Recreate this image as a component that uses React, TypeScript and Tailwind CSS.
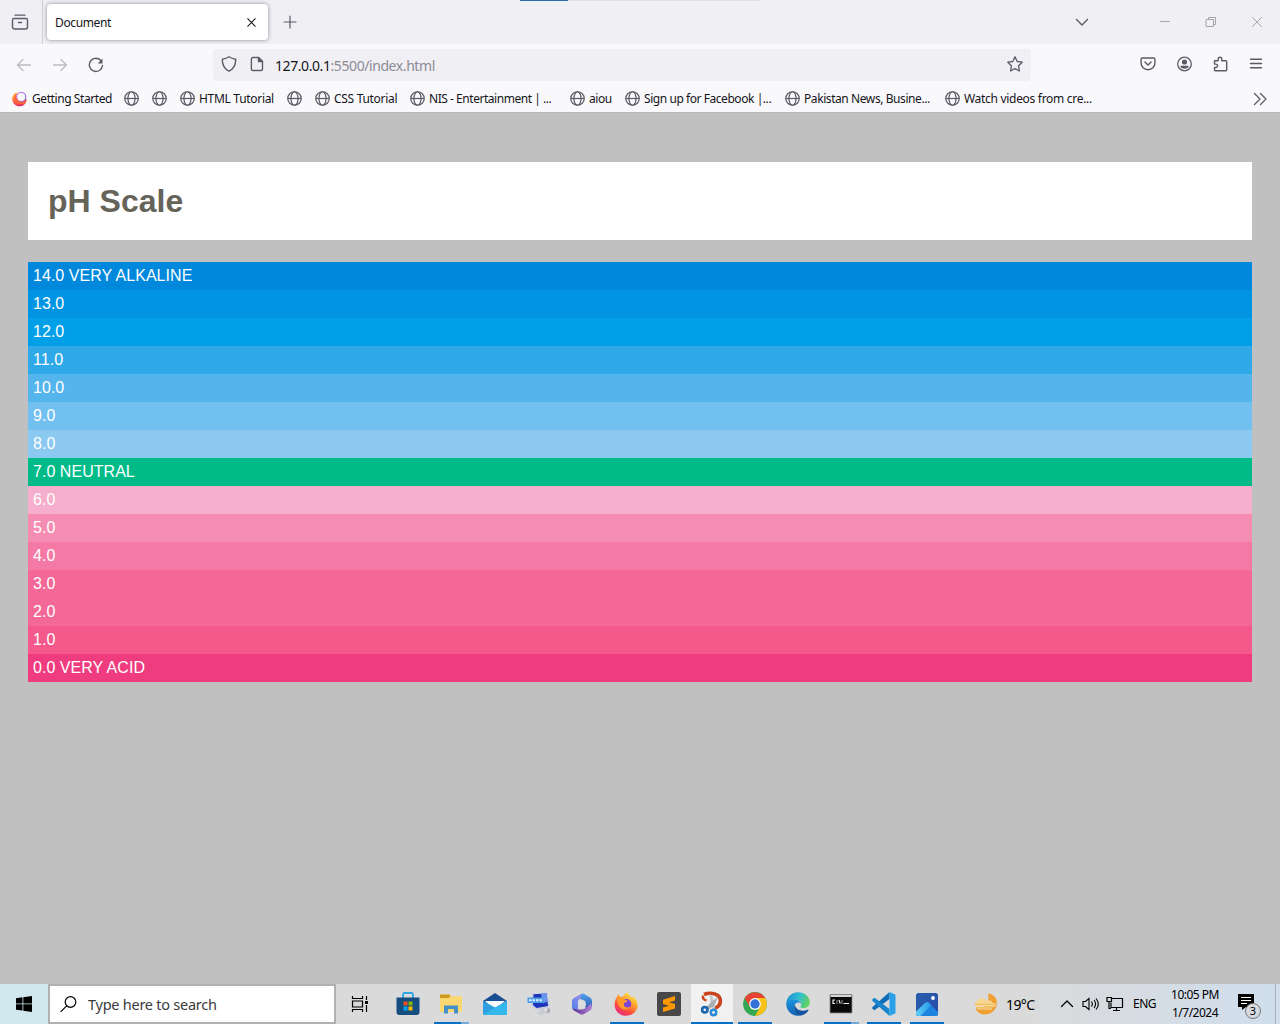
import React from "react";

type IconProps = { className?: string };

const bands = [
  { label: "14.0 VERY ALKALINE", color: "bg-[#0088dd]" },
  { label: "13.0", color: "bg-[#0094e3]" },
  { label: "12.0", color: "bg-[#009fe8]" },
  { label: "11.0", color: "bg-[#30a9e9]" },
  { label: "10.0", color: "bg-[#54b4ec]" },
  { label: "9.0", color: "bg-[#72c0f0]" },
  { label: "8.0", color: "bg-[#8cc9f1]" },
  { label: "7.0 NEUTRAL", color: "bg-[#00bb88]" },
  { label: "6.0", color: "bg-[#f5aecb]" },
  { label: "5.0", color: "bg-[#f58db2]" },
  { label: "4.0", color: "bg-[#f47aa5]" },
  { label: "3.0", color: "bg-[#f36896]" },
  { label: "2.0", color: "bg-[#f36896]" },
  { label: "1.0", color: "bg-[#f5588a]" },
  { label: "0.0 VERY ACID", color: "bg-[#ee3c7e]" },
];

const bookmarks = [
  { label: "", width: "w-7" },
  { label: "", width: "w-7" },
  { label: "HTML Tutorial", width: "w-[107px] tracking-[-0.3px]" },
  { label: "", width: "w-7" },
  { label: "CSS Tutorial", width: "w-[95px] tracking-[-0.3px]" },
  { label: "NIS - Entertainment | ...", width: "w-[160px] tracking-[-0.46px]" },
  { label: "aiou", width: "w-[55px]" },
  { label: "Sign up for Facebook |...", width: "w-[160px] tracking-[-0.44px]" },
  { label: "Pakistan News, Busine...", width: "w-[160px] tracking-[-0.42px]" },
  { label: "Watch videos from cre...", width: "w-[160px] tracking-[-0.3px]" },
];

function Line({ className = "", d, size = 16, width = 1.3 }: IconProps & { d: string; size?: number; width?: number }) {
  return (
    <svg className={"shrink-0 " + className} width={size} height={size} viewBox="0 0 16 16" fill="none" stroke="currentColor" strokeWidth={width} strokeLinecap="round" strokeLinejoin="round">
      <path d={d} />
    </svg>
  );
}

function Globe() {
  return (
    <svg className="shrink-0 text-[#5b5b66]" width="15" height="15" viewBox="0 0 16 16" fill="none" stroke="currentColor" strokeWidth="1.3">
      <circle cx="8" cy="8" r="7.2" />
      <ellipse cx="8" cy="8" rx="3.8" ry="7.2" />
      <path d="M1 8h14" />
    </svg>
  );
}

function FirefoxMark() {
  return (
    <svg className="shrink-0" width="15" height="16" viewBox="0 0 16 16">
      <defs>
        <linearGradient id="gs" x1="0" y1="0" x2="0.5" y2="1">
          <stop offset="0" stopColor="#ffbd3c" />
          <stop offset="0.5" stopColor="#ff7139" />
          <stop offset="1" stopColor="#e32565" />
        </linearGradient>
        <linearGradient id="gr" x1="0" y1="0" x2="1" y2="1">
          <stop offset="0" stopColor="#d987e8" />
          <stop offset="1" stopColor="#7a62e8" />
        </linearGradient>
      </defs>
      <path d="M2.500 2.500C.5 4.500 0 7 .4 9.500 1.300 13.300 4.400 15.800 8 15.800c4.300 0 7.400-3.200 7.400-7.300L9 6 4.500 1z" fill="url(#gs)" />
      <circle cx="9.800" cy="5.800" r="4.900" fill="#f9f9fb" stroke="url(#gr)" strokeWidth="1.300" />
      <path d="M4.200 3.500C4.300 7.500 6.400 10.400 9.700 11c3 .4 5-1.200 5.700-3 .2 2.200-.5 4.200-2 5.500H5L2.500 7z" fill="#fb6440" />
    </svg>
  );
}

function TabStrip() {
  return (
    <div className="flex h-11 bg-[#efeff4] text-[#5b5b66]">
      <div className="flex w-[43px] items-center justify-center border-r border-[#cfcfd8] pr-0.5">
        <svg width="18" height="18" viewBox="0 0 18 18" fill="none" stroke="currentColor" strokeWidth="1.4" strokeLinecap="round">
          <path d="M4 2.100h10M3 5.500h12a1.500 1.500 0 0 1 1.500 1.500v7a2 2 0 0 1-2 2h-11a2 2 0 0 1-2-2V7A1.500 1.500 0 0 1 3 5.500zM7.500 9.500h3" />
        </svg>
      </div>
      <div className="ml-1 mt-1 flex h-9 w-[221px] items-center justify-between rounded bg-white pl-2 pr-[11px] text-[#15141a] shadow-[0_0_4px_rgba(0,0,0,0.4)]">
        <span className="pt-0.5 text-[12px] tracking-[-0.38px]">Document</span>
        <Line d="M2.500 2.500l11 11M13.500 2.500l-11 11" size={11} width={1.5} />
      </div>
      <Line className="ml-[14px] mt-[14px]" d="M8 2v12M2 8h12" size={16} width={1.2} />
      <div className="ml-[222px] flex h-px w-60 bg-[#dedee4]">
        <div className="w-12 bg-[#2c6aa5]" />
      </div>
      <Line className="ml-[314px] mt-[14px]" d="M2.500 5.500L8 11l5.500-5.500" size={16} width={1.4} />
      <div className="ml-auto mt-[14px] flex gap-[30px] pr-[15px] text-[#a5a5ac]">
        <Line d="M3.500 7.500h9" width={1} />
        <Line d="M3.500 5.500h7v7h-7zM5.500 5.500v-2h7v7h-2" width={1} />
        <Line d="M3.500 3.500l9 9M12.500 3.500l-9 9" width={1} />
      </div>
    </div>
  );
}

function NavBar() {
  return (
    <div className="flex h-[41px] items-center text-[#5b5b66]">
      <div className="flex w-[213px] items-center gap-5 pl-4">
        <Line className="text-[#bbbbc1]" d="M14.500 8h-13M7 2.500L1.500 8 7 13.500" width={1.3} />
        <Line className="text-[#bbbbc1]" d="M1.500 8h13M9 2.500L14.500 8 9 13.500" width={1.3} />
        <svg width="16" height="16" viewBox="0 0 16 16" fill="none" stroke="currentColor" strokeWidth="1.4" strokeLinecap="round">
          <path d="M13.300 4A6.600 6.600 0 1 0 14.500 8.500" />
          <path d="M14.500 1.500v5H9.700z" fill="currentColor" stroke="none" />
        </svg>
      </div>
      <div className="flex h-8 w-[818px] items-center rounded bg-[#f0f0f4] pl-2">
        <Line className="-mt-px" d="M8 .8c2 1.400 4 2 6.700 2.400C14.800 9 12.900 13 8 15.200 3.100 13 1.200 9 1.300 3.200 4 2.800 6 2.200 8 .8z" width={1.4} />
        <svg className="-mt-px ml-3" width="16" height="16" viewBox="0 0 16 16" fill="none" stroke="currentColor" strokeWidth="1.4" strokeLinejoin="round">
          <path d="M3.700 1.500H9.500L13.500 5.500v7.700a1.300 1.300 0 0 1-1.300 1.300H3.700a1.300 1.300 0 0 1-1.300-1.300V2.800a1.300 1.300 0 0 1 1.300-1.300z" />
          <path d="M9.500 1.500v4h4z" fill="currentColor" />
        </svg>
        <span className="ml-[10px] pt-px text-[14px] tracking-[-0.42px] text-[#15141a]">
          127.0.0.1<span className="text-[#8b8b94]">:5500/index.html</span>
        </span>
        <Line className="-mt-px ml-auto mr-2" d="M8 .8l2.200 4.700 5 .7-3.600 3.600.8 5.200L8 12.600l-4.400 2.400.8-5.200L.8 6.200l5-.7z" width={1.3} />
      </div>
      <div className="ml-auto flex items-center gap-5 pb-px pr-4">
        <Line d="M2.300 2h11.400c.8 0 1.200.5 1.200 1.200v3.700c0 4-3 6.900-6.900 6.900S1.100 10.900 1.100 6.900V3.200C1.100 2.500 1.500 2 2.300 2zM4.900 6L8 9l3.100-3" width={1.4} />
        <svg width="16" height="16" viewBox="0 0 16 16" fill="currentColor">
          <circle cx="8.500" cy="8" r="6.800" fill="none" stroke="currentColor" strokeWidth="1.3" />
          <circle cx="8.500" cy="6" r="2.600" />
          <path d="M4.300 9.700h8.400c0 1.700-1.900 3-4.200 3s-4.200-1.300-4.200-3z" />
        </svg>
        <Line d="M2.500 4.700h3.700V3a1.800 1.800 0 0 1 3.600 0v1.700h3.900a1 1 0 0 1 1 1v8.100a1 1 0 0 1-1 1H3.500a1 1 0 0 1-1-1v-2.300h1.300a1.700 1.700 0 0 0 0-3.400H2.500z" width={1.4} />
        <Line d="M2.500 3.200h11M2.500 7.500h11M2.500 11.800h11" width={1.4} />
      </div>
    </div>
  );
}

function Bookmarks() {
  return (
    <div className="flex h-[27px] items-center whitespace-nowrap pl-3 text-[12px] tracking-[-0.42px] text-[#15141a]">
      <div className="flex w-28 items-center gap-[5px]"><FirefoxMark />Getting Started</div>
      {bookmarks.map((b, i) => (
        <div key={i} className={"flex shrink-0 items-center gap-1 " + b.width}>
          <Globe />{b.label}
        </div>
      ))}
      <Line className="ml-auto mr-3 text-[#5b5b66]" d="M2.500 2.500L8 8l-5.500 5.500M8.500 2.500L14 8l-5.500 5.500" width={1.3} />
    </div>
  );
}

function Store() {
  return (
    <svg width="24" height="24" viewBox="0 0 24 24">
      <path d="M7 6V2.500A1.500 1.500 0 0 1 8.500 1h7A1.500 1.500 0 0 1 17 2.500V6" fill="none" stroke="#2fa7df" strokeWidth="1.800" />
      <path d="M.5 5.500h23V20a3 3 0 0 1-3 3h-17a3 3 0 0 1-3-3z" fill="#164d80" />
      <path d="M7.500 9.500h4v4h-4z" fill="#f25022" /><path d="M12.500 9.500h4v4h-4z" fill="#7fba00" />
      <path d="M7.500 14.500h4v4h-4z" fill="#00a4ef" /><path d="M12.500 14.500h4v4h-4z" fill="#ffb900" />
    </svg>
  );
}
function Explorer() {
  return (
    <svg width="24" height="24" viewBox="0 0 24 24">
      <path d="M1 3.500A1 1 0 0 1 2 2.500h8.500l1.500 2H22a1 1 0 0 1 1 1V20H1z" fill="#fbd566" />
      <path d="M1 3.500A1 1 0 0 1 2 2.500h8.500l1 1.500-1.500 2H1z" fill="#d09a20" />
      <path d="M1 6h9l1.500-1.500H23V20H1z" fill="#fbd771" />
      <path d="M5 13.500h14v8h-4V17H9v4.500H5z" fill="#438fc7" />
    </svg>
  );
}
function Mail() {
  return (
    <svg width="26" height="24" viewBox="0 0 26 24">
      <path d="M1 9L13 1l12 8v4H1z" fill="#1a4e93" /><path d="M3 9h20l-9 8h-3z" fill="#f7fbff" />
      <path d="M1 9l12 6.500L25 9v12.500a1.500 1.500 0 0 1-1.500 1.500h-21A1.500 1.500 0 0 1 1 21.500z" fill="#2f9fe0" />
      <path d="M25 9L1.500 22.600l1 .4h21a1.500 1.500 0 0 0 1.500-1.500z" fill="#34b8ec" />
    </svg>
  );
}
function Desktop() {
  return (
    <svg width="24" height="24" viewBox="0 0 24 24">
      <path d="M5 1.500L20.500.5l1.800 15L9 17.500 4.500 14z" fill="#c4cce0" />
      <path d="M6.500 2.200L19.500 1.500l1.500 12.500-11.500 2L6 13z" fill="#1d35b8" />
      <path d="M14 1.800l5.500-.3 1.200 8-5 2z" fill="#6a94f0" />
      <path d="M.5 5.500H16.500v5.500H.5z" fill="#4f9fe6" />
      <path d="M2 8.300h2.500M5.500 8.300H8M9 8.300h2.500M12.500 8.300H15" stroke="#d9efff" strokeWidth="2" />
      <path d="M13 17l4-.7v2.700l4 1.500-7 2.500-5-2 4-1.500z" fill="#c9ccd4" />
      <path d="M21 16c2 .3 2.500 1.500 2 3.500l-2 2-1.500-1z" fill="#a4a8b4" />
    </svg>
  );
}
function Office() {
  return (
    <svg width="22" height="24" viewBox="0 0 22 24">
      <defs>
        <linearGradient id="of1" x1="0" y1="1" x2="1" y2="0"><stop stopColor="#4a7fe8" /><stop offset="1" stopColor="#a98fe8" /></linearGradient>
        <linearGradient id="of2" x1="0" y1="0" x2="0" y2="1"><stop stopColor="#4fa5ec" /><stop offset="1" stopColor="#2c4fae" /></linearGradient>
        <linearGradient id="of3" x1="0" y1="0" x2="1" y2="0"><stop stopColor="#5a3191" /><stop offset="1" stopColor="#b37fd8" /></linearGradient>
      </defs>
      <path d="M12.500 1.500c-1 0-2 .2-3 .8L3 6C1.700 7 1 8 1 9.500v5.500c0 1.500.8 2.500 2 3.500l4 1V9.500c0-1 .6-1.800 1.500-2.300l4-2z" fill="url(#of1)" />
      <path d="M10 2l3-.2 6 3.600c1.500 1 2 2.200 2 4V15l-5.500 3-1-1V10.500c0-1-.4-1.600-1.300-2L9.500 7z" fill="url(#of2)" />
      <path d="M1.500 16.500c1 1.500 1.500 2 3 3l4.500 2.500c1.300.7 2.700.7 4 0l5.500-3.200C20.200 18 21 16.500 21 14.500l-1-3-5.500 4.700-3 1.300H6z" fill="url(#of3)" />
      <path d="M9.300 8.800h3.700l2.200 3.500-2.200 3.700H9.300l-2.100-3.700z" fill="#dcdcdc" />
    </svg>
  );
}
function Firefox() {
  return (
    <svg width="24" height="24" viewBox="0 0 24 24">
      <defs>
        <linearGradient id="fx" x1=".85" y1="0" x2=".25" y2="1">
          <stop stopColor="#fff44f" /><stop offset=".4" stopColor="#ffa52f" /><stop offset=".7" stopColor="#ff503c" /><stop offset="1" stopColor="#e52282" />
        </linearGradient>
      </defs>
      <path d="M3 5l1-3 2.500 3 2.500-.5C10 2.500 12 1 14 .3c0 3 3 3.700 4.500 6L19 4c4 4 5.500 8 4.200 12-2 6-8 8.500-14 7.500C4 22.500 0 17.500.7 11.500.9 8.500 1.500 7 3 5z" fill="url(#fx)" />
      <circle cx="12.300" cy="12" r="5" fill="#7b45d6" />
      <path d="M3.500 6c3-1 6-.5 7.500 2l2.500.5c0 2-3 1.500-3.500 3-1 3.500 3.500 5 6.500 3-2 4.500-9 4-11.500-.5C3.500 11.500 3 8.500 3.500 6z" fill="#ff9a2a" />
    </svg>
  );
}
function Sublime() {
  return (
    <svg width="24" height="24" viewBox="0 0 24 24">
      <rect width="24" height="24" rx="2" fill="#484848" />
      <path d="M6 7.700L18 4v4.500L12 10.300l6 1.700v4.500L6 20v-4.500l6-1.800-6-1.700z" fill="#ff9800" />
    </svg>
  );
}
function Snip() {
  return (
    <svg width="24" height="26" viewBox="0 0 24 26" fill="none">
      <path d="M4 3.500c4-1.700 10-2 13.500.7 4 3.200 3.600 8.800.2 11.500-1.200 1-2.700 1.300-3.700 1" stroke="#c9431d" strokeWidth="3.600" />
      <path d="M3 4.500c-.5 3 1 4.500 3.500 5" stroke="#c9431d" strokeWidth="2.400" />
      <path d="M9.500 3l1 10.500 2.500 5h2.500L14 11 12.500 5z" fill="#c3c7cc" />
      <path d="M18 5.500L10.500 12 5 17.500l2.500 1.500 7-4.500z" fill="#a9adb4" />
      <circle cx="4.800" cy="18.800" r="2.700" stroke="#1c66b0" strokeWidth="2.600" />
      <circle cx="13.500" cy="21.500" r="2.700" stroke="#2b8ad6" strokeWidth="2.600" />
    </svg>
  );
}
function Chrome() {
  return (
    <svg width="24" height="24" viewBox="0 0 24 24">
      <circle cx="12" cy="12" r="11.900" fill="#34a853" />
      <path d="M12 12L6.900 15 1.700 6.100A11.900 11.900 0 0 1 22.300 6.100H12z" fill="#e94335" />
      <path d="M12 6.100h10.300A11.900 11.900 0 0 1 12 23.900l5.100-8.900z" fill="#fbc116" />
      <circle cx="12" cy="12" r="5.900" fill="#fff" /><circle cx="12" cy="12" r="4.700" fill="#3472d9" />
    </svg>
  );
}
function Edge() {
  return (
    <svg width="24" height="24" viewBox="0 0 24 24">
      <defs>
        <linearGradient id="edge" x1="0" y1=".3" x2="1" y2=".6"><stop stopColor="#1d8fd6" /><stop offset=".5" stopColor="#2fbfd0" /><stop offset="1" stopColor="#66d455" /></linearGradient>
        <linearGradient id="edge2" x1="0" y1="0" x2="0" y2="1"><stop stopColor="#1b95dd" /><stop offset="1" stopColor="#1361b5" /></linearGradient>
      </defs>
      <path d="M.2 11C1 4.500 6 .2 12 .2c7 0 11.800 4.800 11.800 9.800 0 4-2.800 6-6.300 6-3.200 0-3.600-1.200-2.700-2.300 1.700-2.200-.3-6.200-5.300-6.200C5 7.500 2 9 .2 11z" fill="url(#edge)" />
      <path d="M.2 11C1.500 8.500 4.800 7 8.500 7.200c3.500.2 6.500 2.300 6.800 5-.5-1-1.500-1.700-3-1.700-2.300 0-4.300 2-4.300 5 0 4 3.500 7.500 8 7.500C8 26 0 20.500.2 11z" fill="url(#edge2)" />
      <path d="M9 12.200c-2.500 4.500.5 10.300 5.500 11.300 3.500-.3 6.500-2.500 8-5.300.2-.6-.3-.8-.8-.5-6 2.500-12.700 0-12.700-5.500z" fill="#15559f" />
    </svg>
  );
}
function Terminal() {
  return (
    <svg width="24" height="20" viewBox="0 0 24 20">
      <path d="M1 .5h22v18.500H1z" fill="#0a0a0a" stroke="#8b8b8b" strokeWidth=".8" />
      <path d="M1.500 1h21v2h-21z" fill="#d5d5d5" />
      <path d="M6 6H4v3.500h2M8 6.500v1M8 8.500v1M10 6l1.200 3.500M13 6.500v1M13 8.500v1M14.500 9.500H20" stroke="#f0f0f0" strokeWidth="1.200" fill="none" />
    </svg>
  );
}
function Code() {
  return (
    <svg width="24" height="24" viewBox="0 0 24 24">
      <path d="M17.500 0v7L2.500 18.200.3 16.800v-1.500L17.500 0z" fill="#0f6cb6" />
      <path d="M17.500 24v-7L2.500 5.800.3 7.200v1.500L17.500 24z" fill="#1784cd" />
      <path d="M17.500 0L23.500 2.800v18.400L17.500 24z" fill="#29a0e8" />
    </svg>
  );
}
function Photos() {
  return (
    <svg width="22" height="23" viewBox="0 0 22 23">
      <defs>
        <linearGradient id="ph" x2="1" y2="1"><stop stopColor="#2660ac" /><stop offset="1" stopColor="#2a48a8" /></linearGradient>
        <linearGradient id="ph2" x2="1"><stop stopColor="#5fd0f5" /><stop offset="1" stopColor="#2497e8" /></linearGradient>
        <clipPath id="pc"><rect width="22" height="23" rx="2.500" /></clipPath>
      </defs>
      <g clipPath="url(#pc)">
        <path d="M0 0h22v23H0z" fill="url(#ph)" />
        <path d="M0 23L9 10c1.200-1.400 2.800-1.400 4 0L22 19V23H0z" fill="#1f83e0" />
        <path d="M0 18.500l9.300-8.800c1.200-1 2.400-1 3.600 0l2.500 2.500L4.500 23H0z" fill="url(#ph2)" />
      </g>
      <circle cx="17" cy="5" r="1.900" fill="#fff" />
    </svg>
  );
}

const apps = [
  { Icon: Store, width: "w-[43px]", state: "" },
  { Icon: Explorer, width: "w-11", state: "multi" },
  { Icon: Mail, width: "w-11", state: "" },
  { Icon: Desktop, width: "w-11", state: "" },
  { Icon: Office, width: "w-11 pr-0.5", state: "" },
  { Icon: Firefox, width: "w-[43px] pr-0.5", state: "open" },
  { Icon: Sublime, width: "w-[43px] pr-0.5", state: "" },
  { Icon: Snip, width: "w-[42px]", state: "active" },
  { Icon: Chrome, width: "w-[43px]", state: "open" },
  { Icon: Edge, width: "w-[43px]", state: "" },
  { Icon: Terminal, width: "w-[43px]", state: "multi" },
  { Icon: Code, width: "w-[43px]", state: "open" },
  { Icon: Photos, width: "w-[43px]", state: "open" },
];

function Taskbar() {
  return (
    <div className="flex h-10 shrink-0 bg-linear-to-r from-[#dadada] from-80% to-[#d0deed] text-black">
      <div className="flex w-12 items-center justify-center bg-[#d0e7ee]">
        <svg width="16" height="16" viewBox="0 0 16 16"><path d="M0 2.200l6.500-.9v6.200H0zM7.300 1.200L16 0v7.500H7.300zM0 8.300h6.500v6.300L0 13.700zM7.300 8.300H16V16l-8.700-1.200z" /></svg>
      </div>
      <div className="flex w-[288px] items-center border-2 border-[#b1b1b1] bg-white pl-[10px]">
        <svg width="17" height="17" viewBox="0 0 17 17" fill="none" stroke="black" strokeWidth="1.2"><circle cx="10.500" cy="6" r="5.300" /><path d="M6.700 9.800L.6 15.900" /></svg>
        <span className="ml-[11px] pt-0.5 text-[14.5px] tracking-[-0.25px] text-[#3b3b3b]">Type here to search</span>
      </div>
      <div className="flex w-[50px] items-center justify-center pr-0.5">
        <svg width="18" height="17" viewBox="0 0 18 17" fill="none" stroke="black" strokeWidth="1.2">
          <path d="M1.500 0v2.500h10V0M1.500 16v-2.500h10V16M1.500 5h10v6h-10zM15.500 0v4M15.500 9v7" />
          <path d="M14 5h3v3h-3z" fill="black" stroke="none" />
        </svg>
      </div>
      {apps.map(({ Icon, state, width }, i) => (
        <div key={i} className={"relative flex shrink-0 items-center justify-center " + width + (state === "active" ? " bg-[#f1f1f1]" : "")}>
          <Icon />
          {state && (
            <div className={"absolute bottom-0 flex h-0.5 bg-[#0870c4] " + (state === "active" ? "inset-x-0" : state === "multi" ? "left-[5px] w-[35px]" : "left-[5px] w-[34px]")}>
              {state === "multi" && <div className="ml-auto w-2 bg-[#75a9d7]" />}
            </div>
          )}
        </div>
      ))}
      <div className="ml-auto flex w-[306px] shrink-0 items-center">
        <svg width="24" height="24" viewBox="0 0 24 24">
          <path d="M14 1.500c7 1 10 6 8.500 12-1.500 6-6.500 9-11.500 9-4.500 0-8-2.500-9.500-6 8 1 15-6 12.500-15z" fill="#f0a030" />
          <path d="M4 8.500c1-3 6-3 8 0 4-1 6 .5 6.500 2.500h3V14H1c0-3 1-5 3-5.500z" fill="#f6d690" />
          <path d="M1 12.500h20M2 15.500h17" stroke="#f0c060" strokeWidth="1.4" />
          <path d="M2 14h19M4 17h14" stroke="#f8e0ac" strokeWidth="1.2" />
        </svg>
        <span className="ml-2 w-[53px] text-[14px] tracking-[-0.6px]">19°C</span>
        <Line d="M2.500 10.500L8 5l5.500 5.500" width={1.3} />
        <svg className="ml-[7px] shrink-0" width="18" height="16" viewBox="0 0 18 16" fill="none" stroke="black" strokeWidth="1.1">
          <path d="M1 5.500h2.500L7 2.500v11l-3.500-3H1zM9.500 5.500c1 1.500 1 3.500 0 5M12 4c2 2.500 2 5.500 0 8M14 2.500c3 3.500 3 7.500 0 11" />
        </svg>
        <svg className="ml-1.5 shrink-0" width="18" height="16" viewBox="0 0 18 16" fill="none" stroke="black" strokeWidth="1.2">
          <path d="M6 2.500h10.500v9H5V6.500M10.500 11.500v3M7 14.500h7M1 1.500h4.500v4H1zM3 5.500v7h2" />
        </svg>
        <span className="ml-[9px] w-[28px] text-[12px] tracking-[-0.5px]">ENG</span>
        <div className="ml-1.5 w-14 whitespace-nowrap text-center text-[12px] leading-[18px] tracking-[-0.5px]"><div>10:05 PM</div><div>1/7/2024</div></div>
        <div className="relative ml-[15px] h-6 w-6 shrink-0">
          <svg width="17" height="19" viewBox="0 0 17 19"><path d="M0 2h16v13H8l-4 3v-3H0z" /><path d="M3 5.500h10M3 8.500h10M3 11.500h6" stroke="white" /></svg>
          <div className="absolute -bottom-[3px] left-[7px] flex h-4 w-4 items-center justify-center rounded-full border border-[#777] bg-[#d7dbe1] text-[11px]">3</div>
        </div>
        <div className="ml-auto mr-1 h-10 w-px bg-[#a9afb7]" />
      </div>
    </div>
  );
}

export default function App() {
  return (
    <div className="flex h-screen w-full flex-col overflow-hidden bg-[#c0c0c0] font-['Noto_Sans','Open_Sans',sans-serif]">
      <header className="h-28 shrink-0 bg-[#f9f9fb]">
        <TabStrip />
        <NavBar />
        <Bookmarks />
      </header>
      <main className="flex-1 border-t border-[#b8b8bb] px-7 pt-[49px] font-['Liberation_Sans',sans-serif]">
        <h1 className="h-[78px] bg-white px-5 pt-5 text-[32px] font-bold leading-[38px] text-[#666459]">pH Scale</h1>
        <ul className="mt-[22px] text-base text-white">
          {bands.map((b) => (
            <li key={b.label} className={"h-7 pl-[5px] leading-[27px] tracking-[0.04px] " + b.color}>{b.label}</li>
          ))}
        </ul>
      </main>
      <Taskbar />
    </div>
  );
}
